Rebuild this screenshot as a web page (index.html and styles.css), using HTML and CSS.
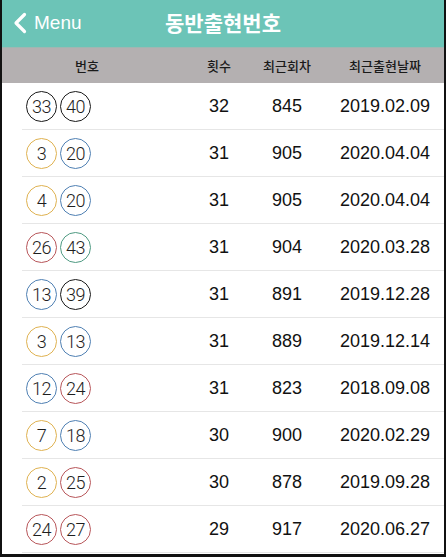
FILE: index.html
```html
<!DOCTYPE html>
<html lang="ko">
<head>
<meta charset="utf-8">
<link rel="stylesheet" href="styles.css">
</head>
<body>
<div class="frame">
  <header class="nav">
    <div class="back">
      <svg class="chev" width="14" height="22" viewBox="0 0 14 22"><path d="M11.5 2.5 L3 11 L11.5 19.5" fill="none" stroke="#fff" stroke-width="3.2" stroke-linecap="round" stroke-linejoin="round"/></svg>
      <span>Menu</span>
    </div>
    <h1 class="title">동반출현번호</h1>
  </header>
  <div class="thead">
    <div class="c1">번호</div>
    <div class="c2">횟수</div>
    <div class="c3">최근회차</div>
    <div class="c4">최근출현날짜</div>
  </div>
  <div class="rows">
    <div class="row"><div class="c1"><span class="ball k">33</span><span class="ball k">40</span></div><div class="c2">32</div><div class="c3">845</div><div class="c4">2019.02.09</div></div>
    <div class="row"><div class="c1"><span class="ball y">3</span><span class="ball b">20</span></div><div class="c2">31</div><div class="c3">905</div><div class="c4">2020.04.04</div></div>
    <div class="row"><div class="c1"><span class="ball y">4</span><span class="ball b">20</span></div><div class="c2">31</div><div class="c3">905</div><div class="c4">2020.04.04</div></div>
    <div class="row"><div class="c1"><span class="ball r">26</span><span class="ball g">43</span></div><div class="c2">31</div><div class="c3">904</div><div class="c4">2020.03.28</div></div>
    <div class="row"><div class="c1"><span class="ball b">13</span><span class="ball k">39</span></div><div class="c2">31</div><div class="c3">891</div><div class="c4">2019.12.28</div></div>
    <div class="row"><div class="c1"><span class="ball y">3</span><span class="ball b">13</span></div><div class="c2">31</div><div class="c3">889</div><div class="c4">2019.12.14</div></div>
    <div class="row"><div class="c1"><span class="ball b">12</span><span class="ball r">24</span></div><div class="c2">31</div><div class="c3">823</div><div class="c4">2018.09.08</div></div>
    <div class="row"><div class="c1"><span class="ball y">7</span><span class="ball b">18</span></div><div class="c2">30</div><div class="c3">900</div><div class="c4">2020.02.29</div></div>
    <div class="row"><div class="c1"><span class="ball y">2</span><span class="ball r">25</span></div><div class="c2">30</div><div class="c3">878</div><div class="c4">2019.09.28</div></div>
    <div class="row"><div class="c1"><span class="ball r">24</span><span class="ball r">27</span></div><div class="c2">29</div><div class="c3">917</div><div class="c4">2020.06.27</div></div>
  </div>
</div>
</body>
</html>
```

FILE: styles.css
```css
* { box-sizing: border-box; }
html, body { margin: 0; padding: 0; background: #111; }
body { width: 446px; height: 557px; overflow: hidden; }
.frame {
  width: 446px;
  height: 557px;
  border-left: 2px solid #111;
  border-right: 2px solid #111;
  border-bottom: 3px solid #111;
  background: #fff;
  display: flex;
  flex-direction: column;
  overflow: hidden;
}
.nav {
  height: 47px;
  background: #6cc4b7;
  display: flex;
  align-items: center;
  justify-content: center;
  position: relative;
  flex: none;
}
.back {
  position: absolute;
  left: 11px;
  top: 12px;
  display: flex;
  align-items: center;
  gap: 7px;
  color: #fff;
  font-family: "Liberation Sans", Arial, sans-serif;
  font-size: 19px;
}
.chev { display: block; }
.title {
  margin: 0;
  color: #fff;
  font-family: "Noto Sans CJK KR", sans-serif;
  font-weight: 700;
  font-size: 21px;
  line-height: 1;
  margin-top: -3px;
}
.thead {
  height: 36px;
  background: #b4b0b1;
  border-top: 1px solid #9fb7b2;
  display: grid;
  grid-template-columns: 188px 58px 78px 1fr;
  align-items: center;
  font-family: "Noto Sans CJK KR", sans-serif;
  font-weight: 500;
  font-size: 13px;
  color: #1a1a1a;
  text-align: center;
  flex: none;
}
.thead .c1 { padding-right: 18px; }
.rows { display: flex; flex-direction: column; }
.row {
  margin-left: 20px;
  height: 47px;
  border-bottom: 1px solid #e6e6e6;
  display: grid;
  grid-template-columns: 168px 58px 78px 1fr;
  align-items: center;
  text-align: center;
  font-family: "Liberation Sans", Arial, sans-serif;
  font-size: 18px;
  color: #111;
}
.row .c1 {
  display: flex;
  gap: 3px;
  padding-left: 4px;
  text-align: left;
}
.ball {
  width: 31px;
  height: 31px;
  border-radius: 50%;
  border: 1.4px solid #222;
  display: flex;
  align-items: center;
  justify-content: center;
  font-family: Roboto, "Liberation Sans", sans-serif;
  font-weight: 300;
  font-size: 18px;
  color: #1e1e1e;
  letter-spacing: -0.5px;
}
.ball.k { border-color: #1a1a1a; }
.ball.y { border-color: #dfb251; }
.ball.b { border-color: #4f80b3; }
.ball.r { border-color: #b8565a; }
.ball.g { border-color: #4e9a82; }
```
